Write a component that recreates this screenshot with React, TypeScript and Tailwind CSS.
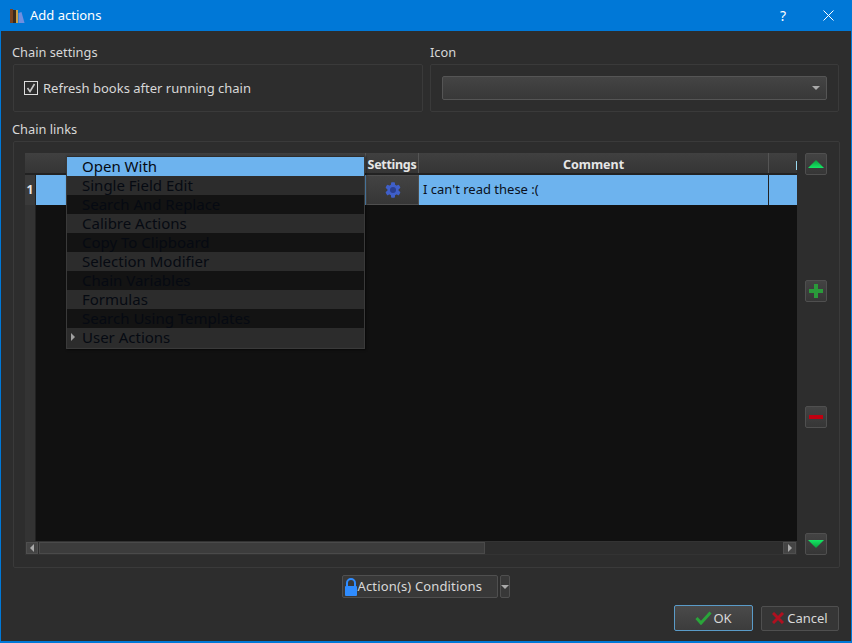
const FONT = "font-['Noto_Sans','Open_Sans',sans-serif]";

const MENU_ITEMS = [
  "Open With",
  "Single Field Edit",
  "Search And Replace",
  "Calibre Actions",
  "Copy To Clipboard",
  "Selection Modifier",
  "Chain Variables",
  "Formulas",
  "Search Using Templates",
  "User Actions",
];

function SideButton({ children }: { children: React.ReactNode }) {
  return (
    <div className="flex h-[22px] w-[22px] items-center justify-center rounded-[2px] border border-[#4f4f4f] bg-gradient-to-b from-[#434343] to-[#363636]">
      {children}
    </div>
  );
}

function ContextMenu() {
  return (
    <div className="absolute left-[41px] top-[2px] w-[299px] border border-[#3a3a3a] bg-[#2d2d2d] py-px shadow-[1px_1px_2px_#0008]">
      {MENU_ITEMS.map((item, i) => (
        <div
          key={item}
          className={`relative flex h-[19px] items-center pl-[15px] text-[15px] leading-none text-[#060a12] ${
            i === 0 ? "bg-[#6db3ee]" : i % 2 === 1 ? "bg-[#2c2c2c]" : "bg-[#131313]"
          }`}
        >
          {i === 9 && (
            <span className="absolute left-[4px] top-[5px] h-0 w-0 border-y-[4px] border-l-[4px] border-y-transparent border-l-[#a0a0a0]" />
          )}
          {item}
        </div>
      ))}
    </div>
  );
}

function ChainTable() {
  return (
    <div className="relative flex h-[402px] w-[772px] flex-col overflow-hidden bg-[#111111]">
      {/* header */}
      <div className="flex h-[22px] shrink-0 border-b-2 border-[#222] bg-gradient-to-b from-[#404040] to-[#353535] text-[12.5px] font-bold leading-[23px] text-[#e6e6e6]">
        <div className="w-[341px] border-r border-[#555]" />
        <div className="w-[53px] border-r border-[#555] text-center tracking-[-0.3px]">Settings</div>
        <div className="w-[350px] border-r border-[#555] text-center">Comment</div>
        <div className="relative flex-1">
          <span className="absolute right-0 top-[8px] h-[9px] w-px bg-[#9ad9f0]" />
        </div>
      </div>
      {/* row */}
      <div className="flex h-[30px] shrink-0">
        <div className="flex w-[11px] items-center justify-center border-r border-[#222] bg-[#3a3a3a] text-[12px] font-bold text-[#e6e6e6]">
          1
        </div>
        <div className="w-[330px] bg-[#6db3ee]" />
        <div className="flex w-[53px] items-center justify-center border border-[#4f4f4f] bg-gradient-to-b from-[#434343] to-[#363636]">
          <svg width="16" height="16" viewBox="0 0 24 24">
            <g fill="#3f5fc9">
              <circle cx="12" cy="12" r="8.5" />
              <rect x="9" y="0.5" width="6" height="23" rx="1.5" />
              <rect x="9" y="0.5" width="6" height="23" rx="1.5" transform="rotate(60 12 12)" />
              <rect x="9" y="0.5" width="6" height="23" rx="1.5" transform="rotate(120 12 12)" />
            </g>
            <circle cx="12" cy="12" r="4.5" fill="#2a3f90" />
          </svg>
        </div>
        <div className="flex w-[350px] items-center border-r border-[#222] bg-[#6db3ee] pl-1 text-[13px] text-[#0a1020]">
          I can't read these :(
        </div>
        <div className="flex-1 bg-[#6db3ee]" />
      </div>
      <div className="flex-1">
        <div className="h-full w-[11px] border-r border-[#222] bg-[#333]" />
      </div>
      {/* horizontal scrollbar */}
      <div className="flex h-[14px] shrink-0 items-stretch gap-px border border-[#333] bg-[#2d2d2d]">
        <div className="flex w-[12px] items-center justify-center border border-[#4f4f4f] bg-[#444]">
          <span className="h-0 w-0 border-y-[4px] border-r-[4px] border-y-transparent border-r-[#aaa]" />
        </div>
        <div className="w-[446px] border border-[#4a4a4a] bg-[#3c3c3c]" />
        <div className="flex-1" />
        <div className="flex w-[13px] items-center justify-center border border-[#4f4f4f] bg-[#444]">
          <span className="h-0 w-0 border-y-[4px] border-l-[4px] border-y-transparent border-l-[#aaa]" />
        </div>
      </div>
      <ContextMenu />
    </div>
  );
}

export default function App() {
  return (
    <div className={`${FONT} flex h-[643px] w-[852px] flex-col border-x border-b-2 border-[#0078d7] bg-[#2d2d2d] text-[13px] text-[#d8d8d8]`}>
      {/* title bar */}
      <div className="flex h-[31px] shrink-0 items-center bg-[#0078d7] pl-[9px] text-white">
        <svg width="16" height="16" viewBox="0 0 16 16">
          <rect x="0" y="1" width="3" height="14" fill="#7a4320" />
          <rect x="3" y="2" width="3" height="13" fill="#3a2a1c" />
          <rect x="6" y="2" width="2" height="13" fill="#c9a24a" />
          <path d="M8.5 5l3-1 3 11h-6z" fill="#6f8fe0" />
        </svg>
        <span className="ml-[4px] pt-px text-[13px]">Add actions</span>
        <span className="ml-auto mr-[37px] text-[14px]">?</span>
        <svg className="mr-[17px]" width="11" height="11" viewBox="0 0 11 11" stroke="white" strokeWidth="1">
          <path d="M0.5 0.5l10 10M10.5 0.5l-10 10" />
        </svg>
      </div>

      {/* settings + icon groups */}
      <div className="flex shrink-0 gap-[7px] px-3 pt-[12px]">
        <div className="w-[410px]">
          <div className="-ml-px h-[21px] text-[12.8px] leading-[18px]">Chain settings</div>
          <div className="flex h-[48px] items-center rounded-[2px] border border-[#3a3a3a] px-[10px]">
            <div className="flex h-[14px] w-[14px] items-center justify-center border border-[#ddd]">
              <svg width="10" height="10" viewBox="0 0 10 10" fill="none" stroke="#c8c8c8" strokeWidth="1.6">
                <path d="M1.5 5l2.5 3.5L8.5 1" />
              </svg>
            </div>
            <span className="ml-[5px] pt-px">Refresh books after running chain</span>
          </div>
        </div>
        <div className="w-[409px]">
          <div className="h-[21px] text-[12.8px] leading-[18px]">Icon</div>
          <div className="flex h-[48px] items-center rounded-[2px] border border-[#3a3a3a] px-[11px]">
            <div className="flex h-[24px] w-full items-center justify-end rounded-[2px] border border-[#555] bg-gradient-to-b from-[#444] to-[#383838] pr-[6px]">
              <span className="h-0 w-0 border-x-[4px] border-t-[4px] border-x-transparent border-t-[#aaa]" />
            </div>
          </div>
        </div>
      </div>

      {/* chain links */}
      <div className="-ml-px mt-[8px] h-[18px] shrink-0 px-3 text-[12.8px] leading-[18px]">Chain links</div>
      <div className="mx-3 mt-[3px] flex h-[427px] w-[827px] shrink-0 rounded-[2px] border border-[#3a3a3a] pl-[11px] pt-[11px]">
        <ChainTable />
        <div className="ml-[8px] flex h-[402px] flex-col justify-between">
          <SideButton>
            <svg width="16" height="8" viewBox="0 0 16 8">
              <defs>
                <linearGradient id="arrowUp" x1="0" y1="0" x2="0" y2="1">
                  <stop offset="0" stopColor="#0c9a3c" />
                  <stop offset="1" stopColor="#14e864" />
                </linearGradient>
              </defs>
              <path d="M8 0l8 8H0z" fill="url(#arrowUp)" />
            </svg>
          </SideButton>
          <SideButton>
            <svg width="16" height="16" viewBox="0 0 16 16"><path d="M6 1h4v5h5v4h-5v5H6v-5H1V6h5z" fill="#2a9a3a" /></svg>
          </SideButton>
          <SideButton>
            <svg width="14" height="4" viewBox="0 0 14 4"><rect width="14" height="4" fill="#c00010" /></svg>
          </SideButton>
          <SideButton>
            <svg width="16" height="8" viewBox="0 0 16 8">
              <defs>
                <linearGradient id="arrowDown" x1="0" y1="0" x2="0" y2="1">
                  <stop offset="0" stopColor="#14e864" />
                  <stop offset="1" stopColor="#0c9a3c" />
                </linearGradient>
              </defs>
              <path d="M0 0h16l-8 8z" fill="url(#arrowDown)" />
            </svg>
          </SideButton>
        </div>
      </div>

      {/* conditions */}
      <div className="mt-[7px] flex shrink-0 justify-center gap-[2px] pr-[1px]">
        <div className="flex h-[23px] w-[156px] items-center rounded-[2px] border border-[#4f4f4f] bg-[#383838] pl-[1px]">
          <svg width="14" height="18" viewBox="0 0 14 18">
            <path d="M3 8V5a4 4 0 018 0v3" fill="none" stroke="#2f8cff" strokeWidth="2" />
            <rect x="1" y="8" width="12" height="10" rx="1" fill="#2f8cff" />
          </svg>
          <span className="pt-px tracking-[0.15px]">Action(s) Conditions</span>
        </div>
        <div className="flex h-[23px] w-[10px] items-center justify-center rounded-[2px] border border-[#4f4f4f] bg-[#383838]">
          <span className="h-0 w-0 border-x-[4px] border-t-[4px] border-x-transparent border-t-[#aaa]" />
        </div>
      </div>

      {/* dialog buttons */}
      <div className="mt-[7px] flex shrink-0 items-center justify-end gap-[8px] pr-3">
        <div className="flex h-[26px] w-[79px] items-center justify-center rounded-[2px] border border-[#5a9bc8] bg-gradient-to-b from-[#4a4a4a] to-[#3c3c3c]">
          <svg width="17" height="14" viewBox="0 0 17 14" fill="none" stroke="#2aa53a" strokeWidth="3">
            <path d="M1.5 7l4.5 5L15.5 1.5" />
          </svg>
          <span className="ml-px pt-px">OK</span>
        </div>
        <div className="flex h-[25px] w-[78px] items-center justify-center rounded-[2px] border border-[#4f4f4f] bg-[#363636]">
          <svg width="12" height="12" viewBox="0 0 12 12" stroke="#b01020" strokeWidth="3">
            <path d="M1 1l10 10M11 1L1 11" />
          </svg>
          <span className="ml-[3px] pt-[2px]">Cancel</span>
        </div>
      </div>
    </div>
  );
}
